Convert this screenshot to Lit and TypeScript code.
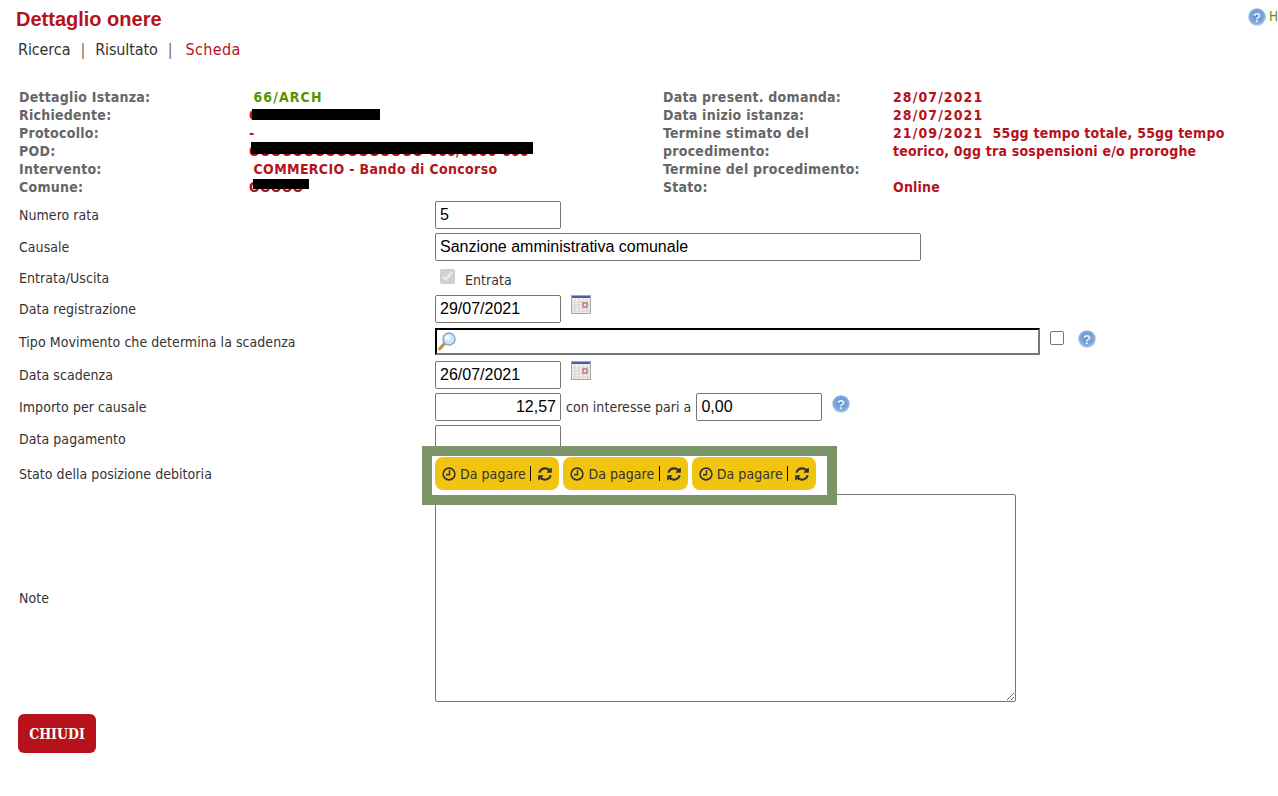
import { LitElement, html, css, svg } from 'lit';
import { customElement } from 'lit/decorators.js';

const helpIcon = (size = 18) => html`
	<svg class="help" width=${size} height=${size} viewBox="0 0 18 18">
		<defs>
			<radialGradient id="hg" cx="50%" cy="45%" r="55%">
				<stop offset="0" stop-color="#5a8ccf" />
				<stop offset="0.7" stop-color="#7ea6da" />
				<stop offset="1" stop-color="#bcd2ec" />
			</radialGradient>
		</defs>
		<circle cx="9" cy="9" r="8.8" fill="url(#hg)" />
		<text x="9" y="13.5" text-anchor="middle" font-family="Liberation Sans" font-weight="700" font-size="13" fill="#eef4fb">?</text>
	</svg>
`;

const calendarIcon = html`
	<svg class="cal" width="20" height="20" viewBox="0 0 20 20">
		<rect x="0.5" y="0.5" width="19" height="18" fill="#f2f0ee" stroke="#a9a6a6" />
		<rect x="1" y="1" width="18" height="2" fill="#4b5ca8" />
		${[4, 8, 12, 16].map((x) => svg`<line x1=${x} y1="3" x2=${x} y2="18" stroke="#d5d2d2" />`)}
		${[7, 10, 13, 16].map((y) => svg`<line x1="1" y1=${y} x2="19" y2=${y} stroke="#d5d2d2" />`)}
		<rect x="12" y="8" width="4" height="4" fill="#f4e6e6" stroke="#b0474f" />
	</svg>
`;

const magnifierIcon = html`
	<svg class="lens" width="20" height="20" viewBox="0 0 20 20">
		<line x1="8" y1="12" x2="2.5" y2="18" stroke="#c58a45" stroke-width="3" stroke-linecap="round" />
		<circle cx="12" cy="8" r="6" fill="#cfe6f7" stroke="#7fa9cf" stroke-width="1.5" />
		<circle cx="10.5" cy="6.5" r="2.5" fill="#f4fbff" />
	</svg>
`;

const clockIcon = html`
	<svg class="clock" width="14" height="14" viewBox="0 0 14 14" fill="none" stroke="#333" stroke-width="1.6">
		<circle cx="7" cy="7" r="5.9" />
		<polyline points="7.5,3 7.5,7.8 4,7.8" stroke-width="1.4" />
	</svg>
`;

const refreshIcon = html`
	<svg class="refresh" width="16" height="16" viewBox="0 0 1792 1792" fill="#333">
		<path
			d="M1639 1056q0 5-1 7-64 268-268 434.500t-478 166.500q-146 0-282.500-55t-243.500-157l-129 129q-19 19-45 19t-45-19-19-45v-448q0-26 19-45t45-19h448q26 0 45 19t19 45-19 45l-137 137q71 66 161 102t187 36q134 0 250-65t186-179q11-17 53-117 8-23 30-23h192q13 0 22.500 9.500t9.500 22.500zm25-800v448q0 26-19 45t-45 19h-448q-26 0-45-19t-19-45 19-45l138-138q-148-137-349-137-134 0-250 65t-186 179q-11 17-53 117-8 23-30 23h-199q-13 0-22.500-9.500t-9.500-22.500v-7q65-268 270-434.500t480-166.500q146 0 284 55.500t245 156.500l130-129q19-19 45-19t45 19 19 45z"
		/>
	</svg>
`;

@customElement('app-root')
export class AppRoot extends LitElement {
	static styles = css`
		:host {
			display: block;
			height: 796px;
			overflow: hidden;
			background: #fff;
			font-family: 'DejaVu Sans', sans-serif;
			font-stretch: condensed;
			color: #333;
		}
		.page {
			padding: 0 0 0 19px;
		}
		.top {
			display: flex;
			justify-content: space-between;
			height: 40px;
			margin-left: -3px;
		}
		h1 {
			margin: 7px 0 0;
			font: 700 20px/24px 'Liberation Sans', sans-serif;
			color: #b5121b;
		}
		.top-help {
			display: flex;
			gap: 2.9px;
			margin: 8px 0 0;
			height: 18px;
			font-size: 13.4px;
			line-height: 18px;
			color: #5b9100;
			width: 30px;
		}
		nav {
			display: flex;
			gap: 10px;
			margin-left: -1px;
			font-size: 16px;
			line-height: 20px;
			height: 20px;
			letter-spacing: -0.1px;
		}
		nav .sep {
			color: #6b6b6b;
		}
		nav .on {
			color: #b5121b;
			letter-spacing: 0.35px;
			margin-left: 3px;
		}
		.summary {
			display: flex;
			margin-top: 28px;
			height: 113px;
			font-size: 14px;
			font-weight: 700;
			line-height: 18px;
			letter-spacing: 0.25px;
			color: #666;
		}
		.info {
			display: grid;
			grid-template-columns: 230px 1fr;
			align-content: start;
		}
		.info.left {
			width: 644px;
		}
		.info.right {
			width: 570px;
		}
		.val {
			color: #b5121b;
			letter-spacing: 0.2px;
		}
		.val.ind {
			padding-left: 4.5px;
		}
		.val.green {
			color: #5b9100;
		}
		.wide {
			letter-spacing: 1.1px;
		}
		.wrap {
			max-width: 335px;
		}
		.redact {
			position: relative;
			display: inline-block;
			white-space: nowrap;
		}
		.bar {
			position: absolute;
			background: #000;
		}
		form {
			display: grid;
			grid-template-columns: 416px 1fr;
			row-gap: 4px;
			align-items: center;
			font-size: 14px;
			letter-spacing: 0.05px;
			color: #333;
		}
		label {
			display: block;
		}
		.ctl {
			display: flex;
			align-items: center;
			position: relative;
		}
		input[type='text'],
		textarea {
			box-sizing: border-box;
			font: 16px 'Liberation Sans', sans-serif;
			color: #000;
			height: 28px;
			padding: 1px 4px;
			background: #fff;
			border: 1px solid #767676;
			border-radius: 2px;
			margin: 0;
			outline: none;
		}
		.w126 {
			width: 126px;
		}
		.causale {
			width: 486px;
		}
		.num {
			text-align: right;
		}
		.tipo-wrap {
			position: relative;
			height: 27px;
			margin-top: -1px;
		}
		.tipo {
			width: 605px;
			height: 27px !important;
			border-width: 2px !important;
			border-style: inset !important;
			border-color: #1f1f1f #767676 #767676 #1f1f1f !important;
			border-radius: 0 !important;
		}
		.lens {
			position: absolute;
			left: 2px;
			top: 3px;
		}
		.check-row {
			height: 26px;
		}
		.check-row input {
			margin: 0 10px 3px 5px;
			width: 15px;
			height: 15px;
			accent-color: #c8c8c8;
		}
		.check-row span {
			padding-top: 3px;
		}
		.cal {
			margin: -8px 0 0 10px;
		}
		.free {
			width: 14px;
			height: 14px;
			margin: 0 0 8px 10px;
			box-sizing: border-box;
			border: 1px solid #767676;
			border-radius: 2px;
			background: #fff;
		}
		.tipo-row {
			height: 30px;
		}
		.tipo-row .help {
			margin: 0 0 7px 14px;
		}
		.between {
			margin: 0 5px 0 5px;
		}
		.importo .help {
			margin: -6px 0 0 10px;
		}
		.status-row {
			height: 33px;
		}
		.highlight {
			position: absolute;
			z-index: 1;
			left: -13px;
			top: -11px;
			box-sizing: border-box;
			width: 415px;
			height: 59px;
			border: 10px solid #7a9669;
			background: #fff;
			padding: 1px 0 0 3px;
			display: flex;
			gap: 4px;
		}
		.chip {
			box-sizing: border-box;
			width: 124.4px;
			height: 33px;
			border-radius: 8px;
			background: #f1c40f;
			display: flex;
			align-items: center;
			padding-left: 7px;
			font-size: 14px;
			color: #333;
		}
		.chip .clock {
			margin-right: 4px;
		}
		.chip .pipe {
			width: 1px;
			height: 15px;
			background: #111;
			margin: 0 6px 0 4.5px;
		}
		textarea {
			width: 581px;
			height: 208px;
			display: block;
			resize: both;
		}
		.close {
			display: block;
			margin: 12px 0 0 -1px;
			width: 78px;
			height: 39px;
			border: 0;
			border-radius: 6px;
			background: #b5121b;
			color: #fff;
			font: 700 14px 'DejaVu Serif', serif;
			font-stretch: condensed;
		}
	`;

	render() {
		return html`
			<div class="page">
				<div class="top">
					<h1>Dettaglio onere</h1>
					<div class="top-help">${helpIcon()}<span>H</span></div>
				</div>
				<nav>
					<span>Ricerca</span><span class="sep">|</span><span>Risultato</span><span class="sep">|</span>
					<span class="on">Scheda</span>
				</nav>
				<div class="summary">
					<div class="info left">
						<span>Dettaglio Istanza:</span><span class="val green ind wide">66/ARCH</span>
						<span>Richiedente:</span>
						<span class="val"><span class="redact">OOOOO OOOOOO<i class="bar" style="left:3px;top:3px;width:128px;height:11px"></i></span></span>
						<span>Protocollo:</span><span class="val">-</span>
						<span>POD:</span>
						<span class="val"><span class="redact">OOOOOOOOOOOOOOOO-000/0000-000<i class="bar" style="left:2px;top:0;width:282px;height:12px"></i></span></span>
						<span>Intervento:</span><span class="val ind" style="letter-spacing:0.34px">COMMERCIO - Bando di Concorso</span>
						<span>Comune:</span>
						<span class="val"><span class="redact">OOOOO<i class="bar" style="left:4px;top:1px;width:56px;height:10px"></i></span></span>
					</div>
					<div class="info right">
						<span>Data present. domanda:</span><span class="val wide">28/07/2021</span>
						<span>Data inizio istanza:</span><span class="val wide">28/07/2021</span>
						<span>Termine stimato del procedimento:</span>
						<span class="val wrap"><span class="wide">21/09/2021</span>&nbsp; 55gg tempo totale, 55gg tempo teorico, 0gg tra sospensioni e/o proroghe</span>
						<span>Termine del procedimento:</span><span class="val"></span>
						<span>Stato:</span><span class="val">Online</span>
					</div>
				</div>
				<form>
					<label>Numero rata</label>
					<div class="ctl"><input type="text" class="w126" .value=${'5'} /></div>

					<label>Causale</label>
					<div class="ctl"><input type="text" class="causale" .value=${'Sanzione amministrativa comunale'} /></div>

					<label>Entrata/Uscita</label>
					<div class="ctl check-row"><input type="checkbox" checked disabled /><span>Entrata</span></div>

					<label>Data registrazione</label>
					<div class="ctl"><input type="text" class="w126" .value=${'29/07/2021'} />${calendarIcon}</div>

					<label>Tipo Movimento che determina la scadenza</label>
					<div class="ctl tipo-row">
						<div class="tipo-wrap"><input type="text" class="tipo" />${magnifierIcon}</div>
						<div class="free"></div>
						${helpIcon()}
					</div>

					<label>Data scadenza</label>
					<div class="ctl"><input type="text" class="w126" .value=${'26/07/2021'} />${calendarIcon}</div>

					<label>Importo per causale</label>
					<div class="ctl importo">
						<input type="text" class="w126 num" .value=${'12,57'} />
						<span class="between">con interesse pari a</span>
						<input type="text" class="w126" .value=${'0,00'} />
						${helpIcon()}
					</div>

					<label>Data pagamento</label>
					<div class="ctl"><input type="text" class="w126" /></div>

					<label>Stato della posizione debitoria</label>
					<div class="ctl status-row">
						<div class="highlight">
							${[0, 1, 2].map(
								() => html`<div class="chip">${clockIcon}<span>Da pagare</span><i class="pipe"></i>${refreshIcon}</div>`,
							)}
						</div>
					</div>

					<label>Note</label>
					<div class="ctl"><textarea></textarea></div>
				</form>
				<button class="close" type="button">CHIUDI</button>
			</div>
		`;
	}
}
